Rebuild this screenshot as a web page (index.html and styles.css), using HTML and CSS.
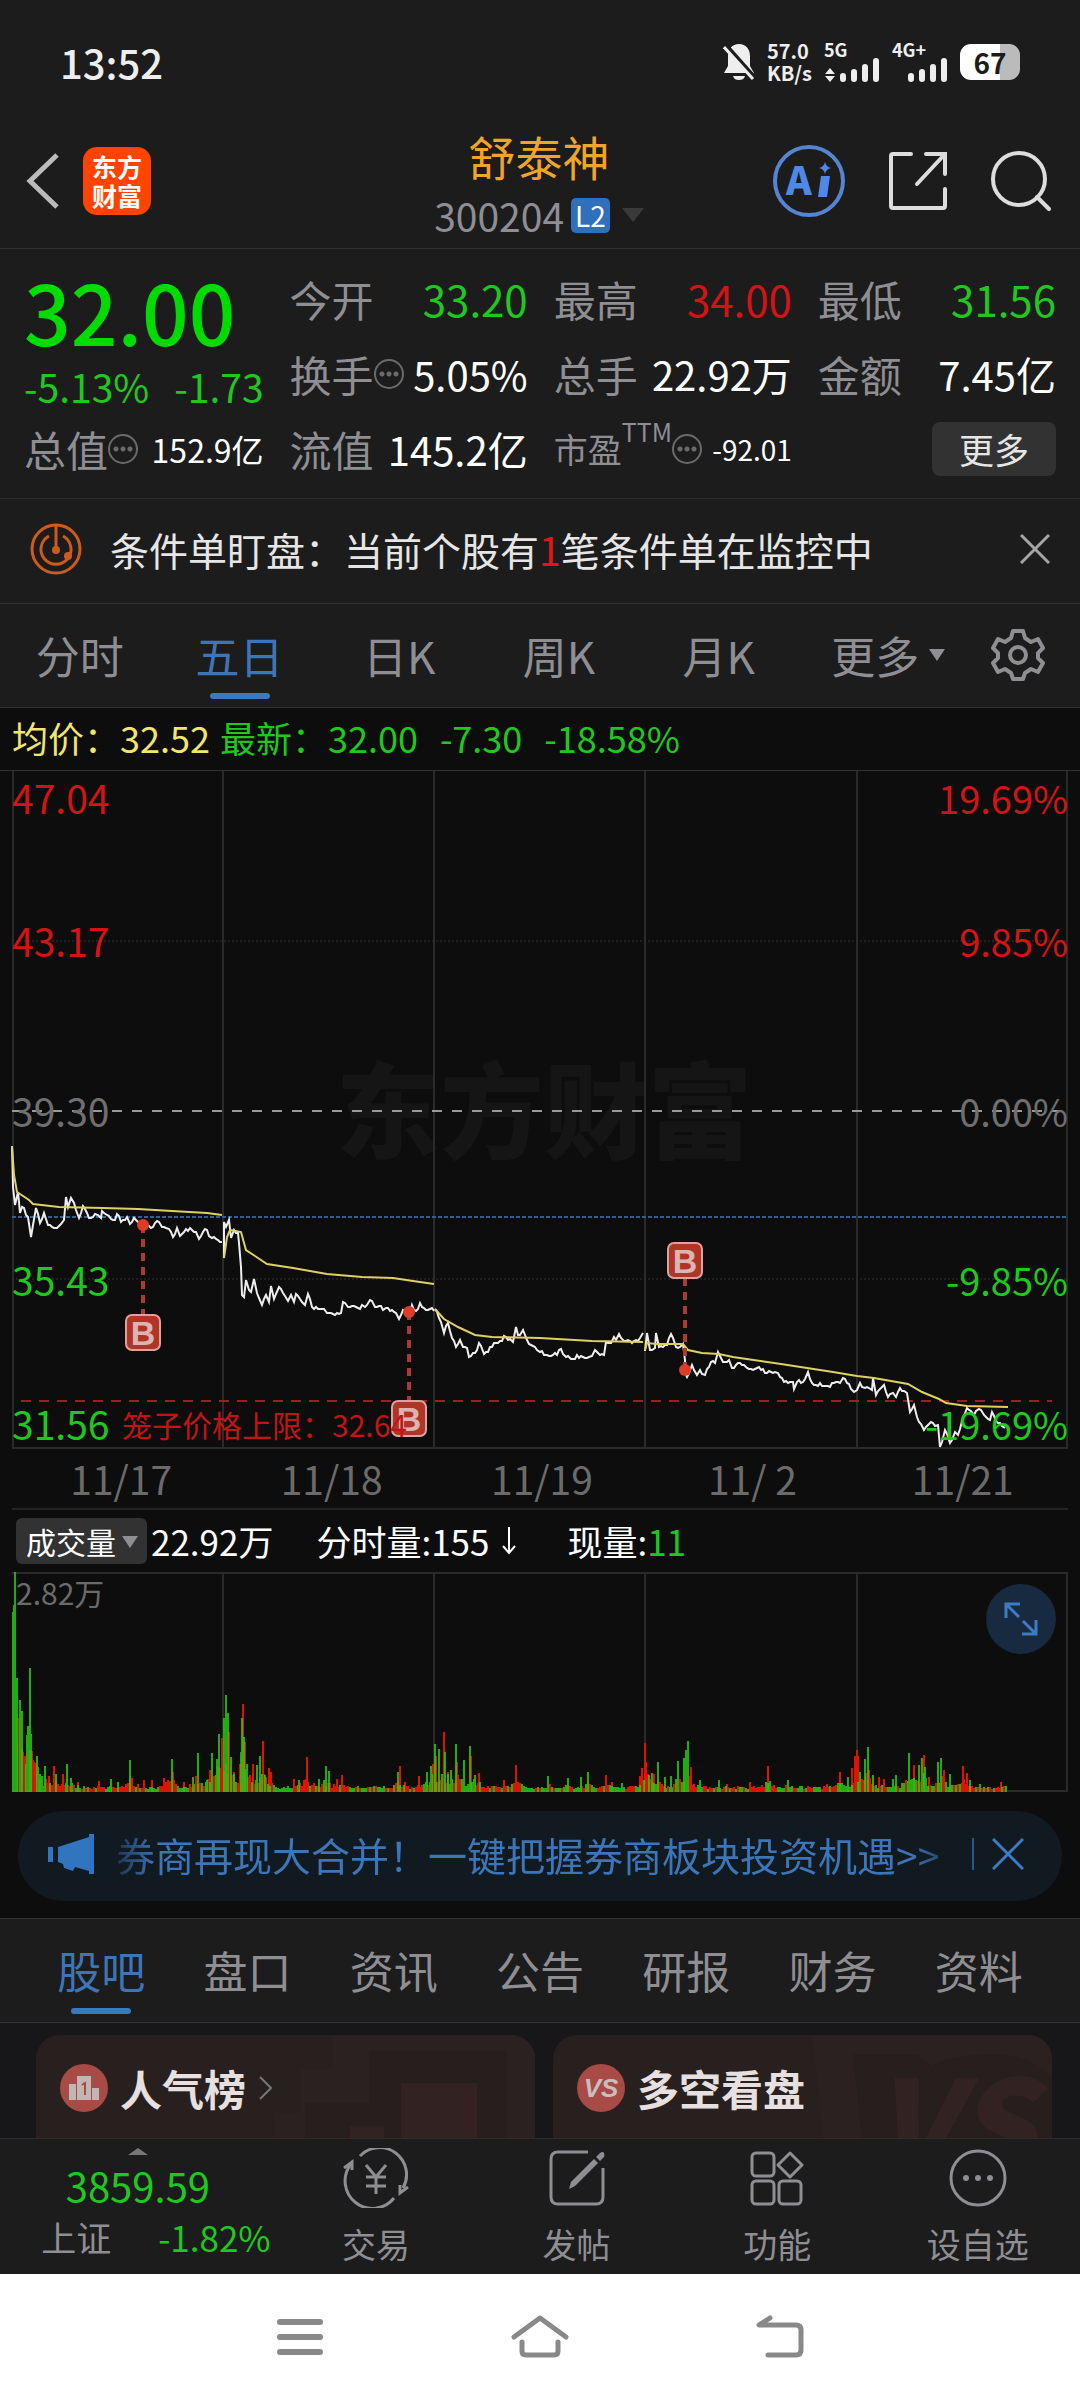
FILE: index.html
```html
<!DOCTYPE html>
<html lang="zh-CN">
<head>
    <meta charset="UTF-8">
    <meta name="viewport" content="width=device-width, initial-scale=1">
    <title>舒泰神 300204</title>
    <link rel="stylesheet" href="styles.css">
</head>
<body>
<!--状态栏-->
<div class="status">
    <span class="time">13:52</span>
    <div class="status-right">
        <svg width="32" height="38" viewBox="0 0 32 38">
            <path d="M16 1c-7 0-11 5-11 12v10l-4 7h30l-4-7V13c0-7-4-12-11-12z" fill="#eee"/>
            <path d="M10 33h12c-1 3-3 4-6 4s-5-1-6-4z" fill="#eee"/>
            <path d="M3 2l30 34" stroke="#1c1c1c" stroke-width="4"/>
            <path d="M1 4l29 32" stroke="#eee" stroke-width="3"/>
        </svg>
        <div class="speed"><span>57.0</span><span>KB/s</span></div>
        <div class="signal">
            <span>5G</span>
            <svg width="56" height="26" viewBox="0 0 56 26">
                <path d="M6 11l5 6H1zM6 25l5-6H1z" fill="#eee"/>
                <path d="M19 19v3M30 15v7M41 10v12M52 4v18" stroke="#eee" stroke-width="6" stroke-linecap="round"/>
            </svg>
        </div>
        <div class="signal">
            <span>4G+</span>
            <svg class="bars" width="42" height="26" viewBox="14 0 42 26">
                <path d="M19 19v3M30 15v7M41 10v12M52 4v18" stroke="#eee" stroke-width="6" stroke-linecap="round"/>
            </svg>
        </div>
        <span class="battery">67</span>
    </div>
</div>

<!--标题-->
<header class="header">
    <div class="header-side">
        <button class="icon-btn" aria-label="返回">
            <svg width="34" height="56" viewBox="0 0 34 56"><path d="M31 2L4 28l27 26" fill="none" stroke="#bbb" stroke-width="5"/></svg>
        </button>
        <a class="logo" href="#"><span>东方</span><span>财富</span></a>
    </div>
    <div class="header-title">
        <h1>舒泰神</h1>
        <div class="code">300204<span class="level">L2</span><i class="tri"></i></div>
    </div>
    <div class="header-side header-tools">
        <button class="icon-btn" aria-label="Ai">
            <svg width="74" height="74" viewBox="0 0 74 74">
                <circle cx="37" cy="37" r="34" fill="none" stroke="#5484d2" stroke-width="4"/>
                <text class="ai-text" x="14" y="51">A</text>
                <path d="M49 32h9l-3 21h-9z" fill="#5088e6"/>
                <path d="M53 18q1 5 6 6-5 1-6 6-1-5-6-6 5-1 6-6z" fill="#5088e6"/>
            </svg>
        </button>
        <button class="icon-btn" aria-label="分享">
            <svg width="60" height="60" viewBox="0 0 60 60" fill="none" stroke="#ddd" stroke-width="4" stroke-linecap="round">
                <path d="M23 3H5q-2 0-2 2v50q0 2 2 2h50q2 0 2-2V38M38 3h19v20M57 3L29 33"/>
            </svg>
        </button>
        <button class="icon-btn" aria-label="搜索">
            <svg width="62" height="62" viewBox="0 0 62 62" fill="none" stroke="#ddd" stroke-width="4" stroke-linecap="round">
                <circle cx="29" cy="29" r="26"/><path d="M47 47l12 12"/>
            </svg>
        </button>
    </div>
</header>

<!--行情-->
<section class="quote">
    <div class="price-box">
        <div class="price">32.00</div>
        <div class="change"><span>-5.13%</span><span>-1.73</span></div>
    </div>
    <div class="item"><span>今开</span><b class="down big">33.20</b></div>
    <div class="item"><span>最高</span><b class="up big">34.00</b></div>
    <div class="item"><span>最低</span><b class="down big">31.56</b></div>
    <div class="item"><span>换手</span><i class="more-dot"></i><b>5.05%</b></div>
    <div class="item"><span>总手</span><b>22.92万</b></div>
    <div class="item"><span>金额</span><b>7.45亿</b></div>
    <div class="item"><span>总值</span><i class="more-dot"></i><b class="mid">152.9亿</b></div>
    <div class="item"><span>流值</span><b>145.2亿</b></div>
    <div class="item"><span class="pe">市盈</span><span class="ttm">TTM</span><i class="more-dot"></i><b class="small">-92.01</b></div>
    <div class="item"><button class="more-btn">更多</button></div>
</section>

<!--条件单-->
<section class="notice">
    <svg width="52" height="52" viewBox="0 0 52 52" fill="none" stroke="#cd5b1e" stroke-width="3">
        <circle cx="26" cy="26" r="24"/>
        <path d="M33 13a15 15 0 1 1-14 0M26 2v24" />
        <circle cx="26" cy="27" r="4" fill="#cd5b1e" stroke="none"/>
        <circle cx="38" cy="33" r="4" fill="#cd5b1e" stroke="none"/>
    </svg>
    <p>条件单盯盘：当前个股有<em>1</em>笔条件单在监控中</p>
    <button class="icon-btn" aria-label="关闭">
        <svg width="30" height="30" viewBox="0 0 30 30"><path d="M1 1l28 28M29 1L1 29" stroke="#a5a5a5" stroke-width="3"/></svg>
    </button>
</section>

<!--周期-->
<nav class="tabs period">
    <button>分时</button>
    <button class="current">五日</button>
    <button>日K</button>
    <button>周K</button>
    <button>月K</button>
    <button>更多<i class="tri"></i></button>
    <button aria-label="设置">
        <svg width="54" height="54" viewBox="0 0 54 54" fill="none" stroke="#8e8e93" stroke-width="4" stroke-linejoin="round">
            <path d="M22 3h10l2 7 6 4 7-3 5 9-5 5v5l5 5-5 9-7-3-6 4-2 6H22l-2-6-6-4-7 3-5-9 5-5v-5l-5-5 5-9 7 3 6-4z"/>
            <circle cx="27" cy="27" r="8"/>
        </svg>
    </button>
</nav>

<!--走势图-->
<section class="chart">
    <div class="legend">
        <span class="avg">均价：32.52</span>
        <span>最新：32.00</span>
        <span>-7.30</span>
        <span>-18.58%</span>
    </div>
    <svg class="trend" viewBox="0 0 1056 678">
        <text class="watermark" x="324" y="380">东方财富</text>
        <path class="grid" d="M1 0V677H1055V0M211 0V678M422 0V678M633 0V678M845 0V678"/>
        <path class="grid-dot" d="M0 170H1056M0 508H1056"/>
        <path class="zero" d="M0 340H1056"/>
        <path class="blue-line" d="M0 446H1056"/>
        <path class="red-line" d="M9 630H1040"/>
        <g id="lines"></g>
        <g id="marks"></g>
        <g class="label up">
            <text x="0" y="43">47.04</text>
            <text x="0" y="186">43.17</text>
            <text class="end" x="1056" y="43">19.69%</text>
            <text class="end" x="1056" y="186">9.85%</text>
        </g>
        <g class="label flat">
            <text x="0" y="356">39.30</text>
            <text class="end" x="1056" y="356">0.00%</text>
        </g>
        <g class="label down">
            <text x="0" y="525">35.43</text>
            <text x="0" y="669">31.56</text>
            <text class="end" x="1056" y="525">-9.85%</text>
            <text class="end" x="1056" y="669">-19.69%</text>
        </g>
        <text class="limit" x="110" y="666">笼子价格上限：32.64</text>
    </svg>
    <div class="dates">
        <span>11/17</span><span>11/18</span><span>11/19</span><span>11/ 2</span><span>11/21</span>
    </div>
    <div class="vol-head">
        <label class="vol-select">
            <select aria-label="指标"><option>成交量</option></select>
            <i class="tri"></i>
        </label>
        <span class="vol-total">22.92万</span>
        <span class="vol-min">分时量:155<svg width="16" height="28" viewBox="0 0 16 28" fill="none" stroke="#fff" stroke-width="2"><path d="M8 0v26M2 19l6 7 6-7"/></svg></span>
        <span>现量:<em>11</em></span>
    </div>
    <div class="volume">
        <svg viewBox="0 0 1056 220">
            <path class="grid" d="M0 1H1055V219H0M211 0V220M422 0V220M633 0V220M845 0V220"/>
            <g id="bars"></g>
            <text class="vol-max" x="4" y="33">2.82万</text>
        </svg>
        <button class="expand" aria-label="全屏">
            <svg width="34" height="34" viewBox="0 0 34 34" fill="none" stroke="#3d7cc4" stroke-width="3">
                <path d="M16 2H2v14M2 2l13 13M18 32h14V18M32 32L19 19"/>
            </svg>
        </button>
    </div>
    <div class="banner">
        <svg width="46" height="40" viewBox="0 0 46 40" fill="#3174c0"><path d="M0 13h5v15H0zM10 13L41 3V0h5v40h-5v-3l-14-4-2 4-9-3-1-4-5-2z"/></svg>
        <a href="#">券商再现大合并！一键把握券商板块投资机遇&gt;&gt;</a>
        <button class="icon-btn" aria-label="关闭">
            <svg width="32" height="32" viewBox="0 0 32 32"><path d="M1 1l30 30M31 1L1 31" stroke="#3d7cc4" stroke-width="3"/></svg>
        </button>
    </div>
</section>

<nav class="tabs info">
    <button class="current">股吧</button>
    <button>盘口</button>
    <button>资讯</button>
    <button>公告</button>
    <button>研报</button>
    <button>财务</button>
    <button>资料</button>
</nav>

<section class="cards">
    <a class="card" href="#">
        <svg class="card-bg" width="260" height="103" viewBox="0 0 260 103">
            <path d="M0 103V78h26V34h32V0h202v103z" fill="#2b2120"/>
            <path d="M30 103V68h64V16h138v87z" fill="#271e1e"/>
            <path d="M126 103V48h76v55zM75 103V91h34v12z" fill="#332222"/>
        </svg>
        <svg width="48" height="48" viewBox="0 0 48 48">
            <circle cx="24" cy="24" r="24" fill="#a84a45"/>
            <path d="M9 36V20h7v16zM17 36V12h14v24zM32 36V24h7v12z" fill="#c0b6b4"/>
            <path d="M22 21l3-2v12" fill="none" stroke="#a84a45" stroke-width="2"/>
        </svg>
        <span>人气榜</span>
        <svg width="14" height="24" viewBox="0 0 14 24"><path d="M1 1l11 11L1 23" fill="none" stroke="#777" stroke-width="2"/></svg>
    </a>
    <a class="card" href="#">
        <svg class="card-bg" width="260" height="103" viewBox="0 0 260 103">
            <path d="M20 0h240v103H31z" fill="#2b2120"/>
            <path d="M61 19h64l15 12q20-12 60-12 40 0 60 24v60H70z" fill="#271e1e"/>
            <text x="80" y="138">VS</text>
        </svg>
        <svg width="48" height="48" viewBox="0 0 48 48">
            <circle cx="24" cy="24" r="24" fill="#a84a45"/>
            <text class="vs" x="24" y="33">VS</text>
        </svg>
        <span>多空看盘</span>
    </a>
</section>

<!--底部-->
<footer class="toolbar">
    <a class="index" href="#">
        <i class="tri tri-up"></i>
        <b>3859.59</b>
        <span class="index-row"><span>上证</span><em>-1.82%</em></span>
    </a>
    <a class="tool" href="#">
        <svg width="66" height="60" viewBox="0 0 66 60" fill="none" stroke="#8e8e93" stroke-width="3">
            <path d="M17 8a27 27 0 0 1 43 32M51 50A27 27 0 0 1 8 16"/>
            <path d="M1 20l8-6v8M65 39l-8 6v-8"/>
            <path d="M23 17l10 12 10-12M23 29h20M23 38h20M33 29v17"/>
        </svg>
        <span>交易</span>
    </a>
    <a class="tool" href="#">
        <svg width="56" height="60" viewBox="0 0 56 60" fill="none" stroke="#8e8e93" stroke-width="3">
            <path d="M39 4H9q-7 0-7 7v38q0 7 7 7h38q7 0 7-7V20"/>
            <path d="M47 9l4-4q3-2 4 0t0 4l-4 4zM45 11l4 4-23 23-6 3 2-7z" fill="#8e8e93" stroke="none"/>
        </svg>
        <span>发帖</span>
    </a>
    <a class="tool" href="#">
        <svg width="54" height="60" viewBox="0 0 54 60" fill="none" stroke="#8e8e93" stroke-width="3">
            <rect x="2" y="5" width="22" height="23" rx="4"/>
            <rect x="2" y="33" width="22" height="23" rx="4"/>
            <rect x="29" y="33" width="22" height="23" rx="4"/>
            <path d="M40 5l12 12-12 12-12-12z" stroke-linejoin="round"/>
        </svg>
        <span>功能</span>
    </a>
    <a class="tool" href="#">
        <svg width="58" height="60" viewBox="0 0 58 60">
            <circle cx="29" cy="30" r="27" fill="none" stroke="#8e8e93" stroke-width="3"/>
            <path d="M17 30h0M29 30h0M41 30h0" stroke="#8e8e93" stroke-width="6" stroke-linecap="round"/>
        </svg>
        <span>设自选</span>
    </a>
</footer>

<div class="sysnav">
    <button aria-label="菜单">
        <svg width="46" height="44" viewBox="0 0 46 44"><path d="M3 7h40M3 22h40M3 37h40" stroke="#898989" stroke-width="6" stroke-linecap="round"/></svg>
    </button>
    <button aria-label="主页">
        <svg width="58" height="44" viewBox="0 0 58 44" fill="none" stroke="#898989" stroke-width="5" stroke-linecap="round" stroke-linejoin="round"><path d="M3 22L29 3l26 19M11 27v9q0 4 4 4h28q4 0 4-4v-9"/></svg>
    </button>
    <button aria-label="返回">
        <svg width="50" height="44" viewBox="0 0 50 44" fill="none" stroke="#898989" stroke-width="5" stroke-linecap="round" stroke-linejoin="round"><path d="M15 3L4 10h37q5 0 5 5v20q0 5-5 5H13"/></svg>
    </button>
</div>
<script src="chart.js"></script>
</body>
</html>
```
FILE: styles.css
```css
*{
    margin: 0;
    padding: 0;
    box-sizing: border-box;
}

body{
    display: flex;
    flex-direction: column;
    min-height: 100vh;
    background-color: #1c1c1c;
    color: #8e8e93;
    font-family: "Noto Sans CJK SC", sans-serif;
}

button, select{
    border: 0;
    background: none;
    color: inherit;
    font: inherit;
    cursor: pointer;
}

a{
    color: inherit;
    text-decoration: none;
}

em, i{
    font-style: normal;
}

svg{
    display: block;
    flex-shrink: 0;
}

.up{
    color: #d21414;
    fill: #d21414;
}
.down{
    color: #1fc81f;
    fill: #1fc81f;
}
.flat{
    fill: #6f6f6f;
}

.tri{
    display: block;
    width: 0;
    height: 0;
    border: 8px solid transparent;
    border-top: 12px solid #8e8e93;
    border-bottom: 0;
}

.icon-btn{
    display: block;
}

/*状态栏*/
.status{
    display: flex;
    justify-content: space-between;
    align-items: center;
    padding: 38px 60px;
    color: #eee;
}
.time{
    font-size: 40px;
    line-height: 48px;
    font-weight: 500;
}
.status-right{
    display: flex;
    align-items: center;
    gap: 12px;
}
.speed{
    display: flex;
    flex-direction: column;
    font-size: 20px;
    line-height: 22px;
    font-weight: 700;
}
.signal{
    display: flex;
    flex-direction: column;
    font-size: 18px;
    line-height: 16px;
    font-weight: 700;
}
.signal .bars{
    margin-left: 14px;
}
.battery{
    width: 60px;
    border-radius: 11px;
    background: linear-gradient(90deg, #fff 66%, #bbb 66%);
    color: #1c1c1c;
    font-size: 28px;
    line-height: 36px;
    font-weight: 700;
    text-align: center;
}

/*标题*/
.header{
    display: grid;
    grid-template-columns: 1fr auto 1fr;
    align-items: center;
    padding: 2px 28px 4px 26px;
    border-bottom: 1px solid #333;
}
.header-side{
    display: flex;
    align-items: center;
    gap: 23px;
    padding-bottom: 8px;
}
.header-tools{
    justify-content: flex-end;
    gap: 42px;
}
.logo{
    display: flex;
    flex-direction: column;
    align-items: center;
    justify-content: center;
    width: 68px;
    height: 68px;
    border-radius: 14px;
    background-color: #ff4400;
    color: #fff;
    font-size: 25px;
    line-height: 29px;
    font-weight: 700;
}
.header-title{
    display: flex;
    flex-direction: column;
    align-items: center;
}
.header-title h1{
    color: #f0a42a;
    font-size: 47px;
    font-weight: 400;
    line-height: 60px;
}
.code{
    display: flex;
    align-items: center;
    gap: 7px;
    font-size: 39px;
    line-height: 58px;
}
.level{
    padding: 0 4px;
    border-radius: 5px;
    background-color: #3070bb;
    color: #fff;
    font-size: 28px;
    line-height: 35px;
}
.code .tri{
    margin-left: 5px;
    border-width: 14px 11px 0;
    border-top-color: #3a3a3a;
}
.ai-text{
    fill: #5088e6;
    font-size: 39px;
    font-weight: 900;
}

/*行情*/
.quote{
    display: grid;
    grid-template-columns: repeat(4, 1fr);
    grid-auto-rows: 75px;
    column-gap: 26px;
    padding: 12px 24px;
    border-bottom: 1px solid #2a2a2a;
}
.price-box{
    grid-row: span 2;
    color: #1fc81f;
}
.price{
    color: #00dc00;
    font-size: 82px;
    line-height: 100px;
    font-weight: 500;
}
.change{
    display: flex;
    gap: 25px;
    font-size: 39px;
    line-height: 50px;
    white-space: nowrap;
}
.item{
    display: flex;
    align-items: center;
    white-space: nowrap;
    font-size: 42px;
}
.item b{
    margin-left: auto;
    color: #fff;
    font-size: 40px;
    font-weight: 400;
}
.item b.up{
    color: #d21414;
}
.item b.down{
    color: #1fc81f;
}
.item .big{
    font-size: 42px;
}
.item .mid{
    font-size: 32px;
}
.item .small{
    font-size: 28px;
}
.item .pe{
    font-size: 34px;
}
.item .ttm{
    font-size: 25px;
    padding-bottom: 36px;
}
.more-dot{
    width: 30px;
    height: 30px;
    border: 2px solid #6a6a6d;
    border-radius: 50%;
    background: radial-gradient(circle, #6a6a6d 2px, transparent 3px) center / 8px 8px no-repeat,
        radial-gradient(circle, #6a6a6d 2px, transparent 3px) 2px center / 8px 8px no-repeat,
        radial-gradient(circle, #6a6a6d 2px, transparent 3px) 16px center / 8px 8px no-repeat;
}
.more-btn{
    margin-left: auto;
    width: 124px;
    border-radius: 8px;
    background-color: #323232;
    color: #e6e6e6;
    font-size: 35px;
    line-height: 54px;
}

/*条件单*/
.notice{
    display: flex;
    align-items: center;
    padding: 22px 30px 26px;
    border-bottom: 1px solid #333;
}
.notice p{
    flex: 1;
    margin-left: 28px;
    color: #e6e6e6;
    font-size: 39px;
    line-height: 56px;
}
.notice em{
    color: #e61414;
}

/*选项卡*/
.tabs{
    display: grid;
    border-bottom: 1px solid #333;
    font-size: 44px;
    line-height: 60px;
}
.tabs button{
    position: relative;
    display: flex;
    align-items: center;
    justify-content: center;
    padding: 21px 0 22px;
}
.tabs .current{
    color: #3d76b8;
}
.tabs .current::after{
    content: "";
    position: absolute;
    bottom: 8px;
    width: 60px;
    height: 6px;
    border-radius: 3px;
    background-color: #3a78bf;
}
.period{
    grid-template-columns: repeat(5, 8fr) 9fr 4fr;
    padding-right: 22px;
}
.period .tri{
    margin-left: 10px;
}
.info{
    grid-template-columns: repeat(7, 1fr);
    padding: 0 28px;
    border-top: 1px solid #333;
}

/*走势图*/
.chart{
    padding-bottom: 17px;
    background-color: #0d0d0d;
}
.legend{
    display: flex;
    gap: 22px;
    padding: 0 12px 4px;
    border-bottom: 1px solid #333;
    color: #1fc81f;
    font-size: 36px;
    line-height: 58px;
}
.legend .avg{
    margin-right: -12px;
    color: #f0e66e;
}
.trend{
    width: calc(100% - 24px);
    margin: 0 12px;
    overflow: visible;
}
.trend path, .volume path{
    fill: none;
}
.grid{
    stroke: #2a2a2a;
    stroke-width: 2;
}
.grid-dot{
    stroke: #333;
    stroke-width: 1;
    stroke-dasharray: 2 2;
}
.zero{
    stroke: #999;
    stroke-width: 2;
    stroke-dasharray: 10 10;
}
.blue-line{
    stroke: #33608f;
    stroke-width: 2;
    stroke-dasharray: 4 2;
}
.red-line{
    stroke: #9c2020;
    stroke-width: 2;
    stroke-dasharray: 10 8;
}
.trend .line-avg{
    stroke: #dcd264;
    stroke-width: 2;
}
.trend .line-price{
    stroke: #eee;
    stroke-width: 2;
}
.watermark{
    fill: #151515;
    font-size: 104px;
    font-weight: 900;
}
.label{
    font-size: 39px;
}
.label .end{
    font-size: 38px;
    text-anchor: end;
}
.limit{
    fill: #c31414;
    font-size: 30px;
}
.mark-line{
    stroke: #a83c30;
    stroke-width: 4;
    stroke-dasharray: 8 6;
}
.mark-dot{
    fill: #dc3c28;
}
.mark-box{
    fill: #b03527;
    stroke: #d8a49e;
    stroke-width: 2;
}
.mark-text{
    fill: #dcb4b0;
    font-family: "Liberation Sans", sans-serif;
    font-size: 34px;
    font-weight: 700;
    text-anchor: middle;
}
.dates{
    display: grid;
    grid-template-columns: repeat(5, 1fr);
    margin: 0 12px;
    padding-left: 4px;
    border-bottom: 2px solid #222;
    color: #6b6b6b;
    font-size: 39px;
    line-height: 59px;
    text-align: center;
}

/*成交量*/
.vol-head{
    display: flex;
    align-items: center;
    padding: 3px 16px;
    color: #fff;
    font-size: 35px;
    line-height: 56px;
}
.vol-select{
    position: relative;
}
.vol-select select{
    display: block;
    width: 131px;
    height: 46px;
    padding-left: 10px;
    border-radius: 6px;
    background-color: #323232;
    font-size: 30px;
    line-height: 42px;
    appearance: none;
}
.vol-select .tri{
    position: absolute;
    top: 18px;
    right: 9px;
}
.vol-total{
    margin: 0 43px 0 4px;
}
.vol-min{
    display: flex;
    align-items: center;
    margin-right: 50px;
}
.vol-min svg{
    margin-left: 12px;
}
.vol-head em{
    color: #1fc81f;
}
.volume{
    position: relative;
    margin: 0 12px;
}
.vol-max{
    fill: #6b6b6b;
    font-size: 30px;
}
.volume .bar-up{
    stroke: #dc1400;
    stroke-width: 2;
}
.volume .bar-down{
    stroke: #28c814;
    stroke-width: 2;
    opacity: 0.85;
}
.expand{
    position: absolute;
    top: 12px;
    right: 12px;
    width: 70px;
    height: 70px;
    padding: 18px;
    border-radius: 50%;
    background-color: #172a3f;
}

.banner{
    display: flex;
    align-items: center;
    margin: 19px 18px 0;
    padding: 15px 38px 19px 30px;
    border-radius: 45px;
    background-color: #111921;
    color: #3d76b8;
}
.banner a{
    flex: 1;
    margin-left: 22px;
    font-size: 39px;
    line-height: 56px;
    white-space: nowrap;
    overflow: hidden;
    -webkit-mask-image: linear-gradient(90deg, rgba(0, 0, 0, .3), #000 40px, #000 795px, rgba(0, 0, 0, .4) 830px);
    mask-image: linear-gradient(90deg, rgba(0, 0, 0, .3), #000 40px, #000 795px, rgba(0, 0, 0, .4) 830px);
}
.banner .icon-btn{
    padding-left: 18px;
    border-left: 2px solid #2c5688;
}

/*卡片*/
.cards{
    display: grid;
    grid-template-columns: 1fr 1fr;
    gap: 18px;
    padding: 12px 28px 0 36px;
    background-color: #17171a;
}
.card{
    position: relative;
    display: flex;
    align-items: center;
    padding: 23px 24px 20px;
    border-radius: 24px 24px 0 0;
    background-color: #281f1f;
    color: #e6e0e0;
    font-size: 42px;
    font-weight: 700;
    line-height: 60px;
    overflow: hidden;
}
.card span{
    position: relative;
    margin: 0 13px 0 12px;
}
.card svg{
    position: relative;
}
.card .card-bg{
    position: absolute;
    top: 0;
    right: 0;
}
.card-bg text{
    fill: #332222;
    font-size: 128px;
    font-style: italic;
    font-weight: 900;
}
.vs{
    fill: #c9bebc;
    font-family: "Liberation Sans", sans-serif;
    font-size: 26px;
    font-style: italic;
    font-weight: 700;
    text-anchor: middle;
}

/*底部*/
.toolbar{
    display: grid;
    grid-template-columns: 11fr 8fr 8fr 8fr 8fr;
    border-top: 1px solid #2c2c2c;
    padding: 9px 2px 5px 0;
    font-size: 34px;
    line-height: 50px;
}
.index{
    display: flex;
    flex-direction: column;
    align-items: center;
    color: #1fc81f;
}
.index b{
    font-size: 40px;
    font-weight: 400;
    line-height: 60px;
}
.index .tri-up{
    border: 10px solid transparent;
    border-top: 0;
    border-bottom: 7px solid #77777a;
}
.index-row{
    display: flex;
    gap: 47px;
    padding-left: 36px;
    font-size: 35px;
    line-height: 44px;
    white-space: nowrap;
}
.index-row span{
    color: #8e8e93;
}
.tool{
    display: flex;
    flex-direction: column;
    align-items: center;
    gap: 11px;
}

.sysnav{
    flex: 1;
    display: grid;
    grid-template-columns: repeat(3, 240px);
    justify-content: center;
    align-items: center;
    min-height: 125px;
    background-color: #fff;
}
.sysnav svg{
    margin: 0 auto;
}
```
FILE: chart.js
```js
var svgNS="http://www.w3.org/2000/svg";

function getElement(id) {
    return document.getElementById(id);
}

function draw(parent,name,attrs,text) {
    var node=document.createElementNS(svgNS,name);
    for(var key in attrs){
        node.setAttribute(key,attrs[key]);
    }
    if (text){
        node.textContent=text;
    }
    parent.appendChild(node);
}

//固定种子,每次刷新图形一致
var seed=7;
function random() {
    seed=(seed*16807)%2147483647;
    return seed/2147483647;
}

//五日均价, 每天一段
var avgDays=[
    "0,375 2,404 5,421 17,429 21,433 47,436 91,437 126,438 160,440 195,442 210,444",
    "212,487 215,466 218,459 229,461 234,479 246,487 255,493 281,497 315,503 350,506 381,507 401,510 422,513",
    "423,538 432,548 446,556 463,564 480,566 528,567 580,570 631,571",
    "633,579 635,572 645,573 671,573 676,579 690,582 707,583 721,586 769,593 821,601 845,605 862,607 879,610 896,613 910,621 927,628 934,632 955,635 996,636"
];

//五日价格
var priceDays=[
    "0,375 1,416 3,434 6,421 8,442 10,436 16,446 19,466 24,437 28,452 32,442 36,454 45,457 52,449 54,426 56,436 59,427 62,432 67,447 71,435 77,447 86,444 89,447 90,440 95,444 103,449 105,443 109,451 115,446 118,453 122,447 131,455 141,456 145,450 150,456 157,458 161,466 165,457 168,465 174,458 184,461 187,468 193,458 200,467 210,471",
    "212,487 212,451 214,456 217,449 219,467 222,459 226,462 227,472 229,496 230,524 232,526 234,509 237,519 239,521 242,508 245,522 250,534 254,524 257,531 259,515 262,528 267,516 276,530 279,524 282,531 284,523 293,534 296,523 300,536 312,538 315,542 329,542 331,531 336,536 353,536 358,529 363,536 374,537 384,542 387,548 391,539 397,546 400,534 404,540 408,532 412,537 422,540",
    "423,538 427,547 432,562 436,552 440,567 444,576 448,569 451,576 455,577 457,586 463,582 467,572 472,583 484,572 494,566 501,571 504,556 506,564 511,559 517,573 528,581 535,584 545,584 549,578 554,586 559,588 569,585 580,585 583,579 588,584 592,584 594,571 599,572 602,566 604,569 607,563 612,570 626,570 631,562",
    "633,580 635,562 638,579 643,577 644,562 647,576 655,574 659,563 664,576 671,573 673,589 673,602 675,606 680,594 685,604 688,599 693,604 699,591 703,592 706,581 711,591 717,589 720,597 726,592 735,597 741,599 747,596 755,602 766,602 772,611 781,611 782,618 785,611 791,611 796,601 800,612 814,615 828,612 831,607 835,612 842,621 845,619 848,612 853,617 860,619 861,607 864,624 869,617 872,614 876,626 881,622 884,626 888,617 895,622 898,641 902,634 905,646 912,659 917,653 926,654 928,676 933,659 938,672 943,661 946,664 955,637 962,644 967,638 972,644 978,649 980,641 986,652 993,657"
];

function parse(str) {
    return str.split(" ").map(function (item) {
        return item.split(",").map(Number);
    });
}

//两点之间补上小波动
function priceLine(str) {
    var points=parse(str);
    var d="M"+points[0];
    for(var i=1;i<points.length;i++){
        var from=points[i-1];
        var to=points[i];
        for(var x=from[0]+2;x<to[0]-1;x+=2){
            var y=from[1]+(to[1]-from[1])*(x-from[0])/(to[0]-from[0]);
            d+="L"+x+","+Math.round(y+random()*4-2);
        }
        d+="L"+to;
    }
    return d;
}

var lines=getElement("lines");
for(var i=0;i<avgDays.length;i++){
    draw(lines,"path",{"class":"line-price","d":priceLine(priceDays[i])});
    draw(lines,"path",{"class":"line-avg","d":"M"+parse(avgDays[i]).join("L")});
}

//买入点
var marks=[
    {x:131,dot:454,box:544},
    {x:397,dot:541,box:630},
    {x:673,dot:599,box:472}
];
var markBox=getElement("marks");
marks.forEach(function (m) {
    draw(markBox,"path",{"class":"mark-line","d":"M"+m.x+" "+m.dot+"V"+(m.box>m.dot?m.box:m.box+36)});
    draw(markBox,"circle",{"class":"mark-dot","cx":m.x,"cy":m.dot,"r":6});
    draw(markBox,"rect",{"class":"mark-box","x":m.x-17,"y":m.box,"width":34,"height":35,"rx":6});
    draw(markBox,"text",{"class":"mark-text","x":m.x,"y":m.box+30},"B");
});

//成交量: x,高度,涨跌
var peaks="0,38,g 1,180,g 2,187,g 3,220,g 5,114,g 6,65,r 8,92,g 10,81,g 11,40,r 13,36,r 15,57,g 16,66,g 18,124,g 19,58,g 21,32,r 25,36,g 28,18,g 33,26,g 37,16,r 42,26,r 44,18,g 51,18,r 55,28,g 59,14,g 66,10,r 87,11,r 99,13,g 106,10,g 118,32,g 132,12,r 140,12,r 152,14,r 160,33,g 161,20,r 172,10,r 181,15,g 186,39,g 195,12,g 198,22,r 200,39,g 205,33,g 207,58,g 210,54,r 212,74,g 214,97,g 216,79,g 217,60,r 219,35,g 222,20,r 229,40,g 230,74,g 231,88,r 232,55,g 233,50,r 235,28,g 241,28,r 245,27,g 248,36,g 251,51,r 253,17,g 257,24,r 259,20,r 282,13,r 287,12,g 295,35,r 307,13,g 314,26,g 317,21,g 325,13,r 330,17,r 386,20,g 388,26,r 393,10,r 407,16,r 415,20,g 419,26,g 421,28,r 423,48,g 424,36,r 427,43,g 432,60,r 433,40,g 436,20,r 439,22,g 444,48,g 445,30,r 452,32,g 458,46,g 459,36,r 463,17,g 467,19,r 492,12,r 504,27,r 536,16,g 556,14,g 569,15,g 576,20,g 594,17,r 600,10,r 610,9,g 628,16,r 630,24,r 633,49,r 634,30,r 637,17,g 640,19,g 642,18,r 646,30,g 653,15,g 659,16,g 664,13,g 666,31,g 672,34,g 674,42,g 676,51,g 679,25,r 688,12,g 707,12,g 715,8,r 738,10,r 756,26,r 776,12,g 815,8,r 828,20,r 836,15,g 840,24,r 843,36,r 845,42,r 846,36,r 848,20,g 853,33,g 856,45,g 857,22,r 861,17,g 867,15,r 872,13,r 881,13,g 884,17,g 897,39,g 902,27,r 907,27,g 910,34,g 912,37,r 913,25,g 917,15,r 926,30,g 929,34,g 932,22,r 938,18,g 951,26,r 955,19,r 958,12,g 968,8,g 989,10,r".split(" ").map(function (item) {
    return item.split(",");
});
var barUp="";
var barDown="";
for(var x=0;x<996;x+=2){
    var h=4;
    for(var j=0;j<peaks.length;j++){
        h=Math.max(h,peaks[j][1]*0.5*Math.exp(-Math.abs(x-peaks[j][0])/8));
    }
    h=Math.round(2+h*(0.3+random()*0.7));
    if (random()>0.5){
        barUp+="M"+x+" 220v-"+h;
    }else{
        barDown+="M"+x+" 220v-"+h;
    }
}
for(var k=0;k<peaks.length;k++){
    if (peaks[k][2]=="r"){
        barUp+="M"+peaks[k][0]+" 220v-"+peaks[k][1];
    }else{
        barDown+="M"+peaks[k][0]+" 220v-"+peaks[k][1];
    }
}
var bars=getElement("bars");
draw(bars,"path",{"class":"bar-up","d":barUp});
draw(bars,"path",{"class":"bar-down","d":barDown});
```
